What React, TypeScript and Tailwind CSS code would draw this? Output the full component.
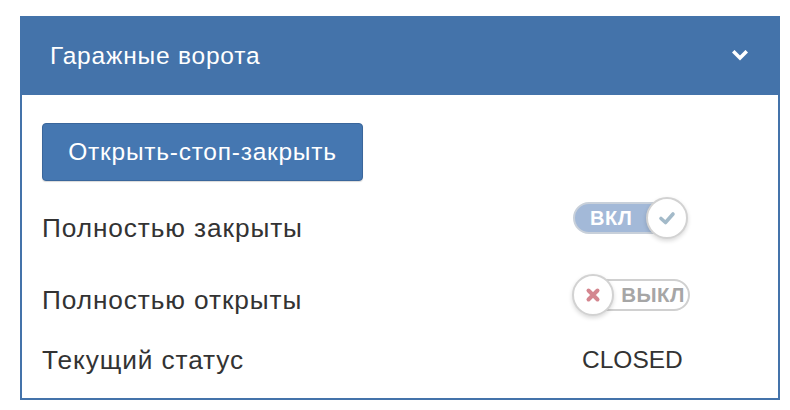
import React from "react";

function Check() {
  return (
    <svg width="20" height="20" viewBox="0 0 20 20">
      <path d="M4 10.5 L8.5 14.5 L16 6" fill="none" stroke="#a3bac9" strokeWidth="3.6" strokeLinecap="round" strokeLinejoin="round" />
    </svg>
  );
}

function Cross() {
  return (
    <svg width="18" height="18" viewBox="0 0 18 18">
      <path d="M4.5 4.5 L13.5 13.5 M13.5 4.5 L4.5 13.5" fill="none" stroke="#d4868f" strokeWidth="4" strokeLinecap="round" />
    </svg>
  );
}

function ToggleOn() {
  return (
    <div className="relative w-[118px] h-[42px]">
      <div className="absolute left-[1px] top-[5px] w-[112px] h-[32px] rounded-full bg-[#a3b9d8] border-2 border-[#c8d0da] flex items-center pl-[15px]">
        <span className="text-white font-bold text-[20px] tracking-[0.5px] leading-none">ВКЛ</span>
      </div>
      <div className="absolute left-[74px] top-[0px] w-[42px] h-[42px] rounded-full bg-white border-2 border-[#d2d2d2] shadow-[0_2px_4px_rgba(0,0,0,0.15)] flex items-center justify-center">
        <Check />
      </div>
    </div>
  );
}

function ToggleOff() {
  return (
    <div className="relative w-[118px] h-[42px]">
      <div className="absolute left-[1px] top-[5px] w-[117px] h-[32px] rounded-full bg-white border-2 border-[#d0d0d0] flex items-center justify-end pr-[3px]">
        <span className="text-[#a6a6a6] font-bold text-[20.5px] tracking-[0.5px] leading-none">ВЫКЛ</span>
      </div>
      <div className="absolute left-[0px] top-[0px] w-[42px] h-[42px] rounded-full bg-white border-2 border-[#d2d2d2] shadow-[0_2px_4px_rgba(0,0,0,0.15)] flex items-center justify-center">
        <Cross />
      </div>
    </div>
  );
}

export default function App() {
  return (
    <div className="w-[790px] h-[410px] bg-white pt-[16px] pl-[20px]" style={{ fontFamily: '"Liberation Sans", Arial, sans-serif' }}>
      <div className="w-[760px] h-[384px] border-2 border-[#4473aa] flex flex-col">
        <div className="h-[78px] bg-[#4473aa] flex items-center justify-between pl-[28px] pr-[30px] -mt-[1px]">
          <span className="text-white text-[24.5px] tracking-[0.8px] leading-none">Гаражные ворота</span>
          <svg width="16" height="12" viewBox="0 0 16 12">
            <polyline points="2.5,2.5 8,8 13.5,2.5" fill="none" stroke="white" strokeWidth="3.6" strokeLinecap="square" />
          </svg>
        </div>
        <div className="pl-[20px] pt-[28px] text-[#333333] text-[26.25px] leading-[35px]">
          <button className="w-[321px] h-[58px] rounded-[4px] bg-[#4577b1] border border-[#3a669b] text-white text-[24.5px] tracking-[0.75px] leading-none shadow-[0_1px_1px_rgba(0,0,0,0.15)]">
            Открыть-стоп-закрыть
          </button>
          <div className="grid grid-cols-[530px_1fr] h-[68px]">
            <div className="pt-[30px] tracking-[0.9px]">Полностью закрыты</div>
            <div className="pt-[16px]"><ToggleOn /></div>
          </div>
          <div className="grid grid-cols-[530px_1fr] h-[72px]">
            <div className="pt-[34px] tracking-[0.9px]">Полностью открыты</div>
            <div className="pt-[25px]"><ToggleOff /></div>
          </div>
          <div className="grid grid-cols-[540px_1fr]">
            <div className="pt-[22px] tracking-[0.9px]">Текущий статус</div>
            <div className="pt-[21px] text-[24.5px]">CLOSED</div>
          </div>
        </div>
      </div>
    </div>
  );
}
